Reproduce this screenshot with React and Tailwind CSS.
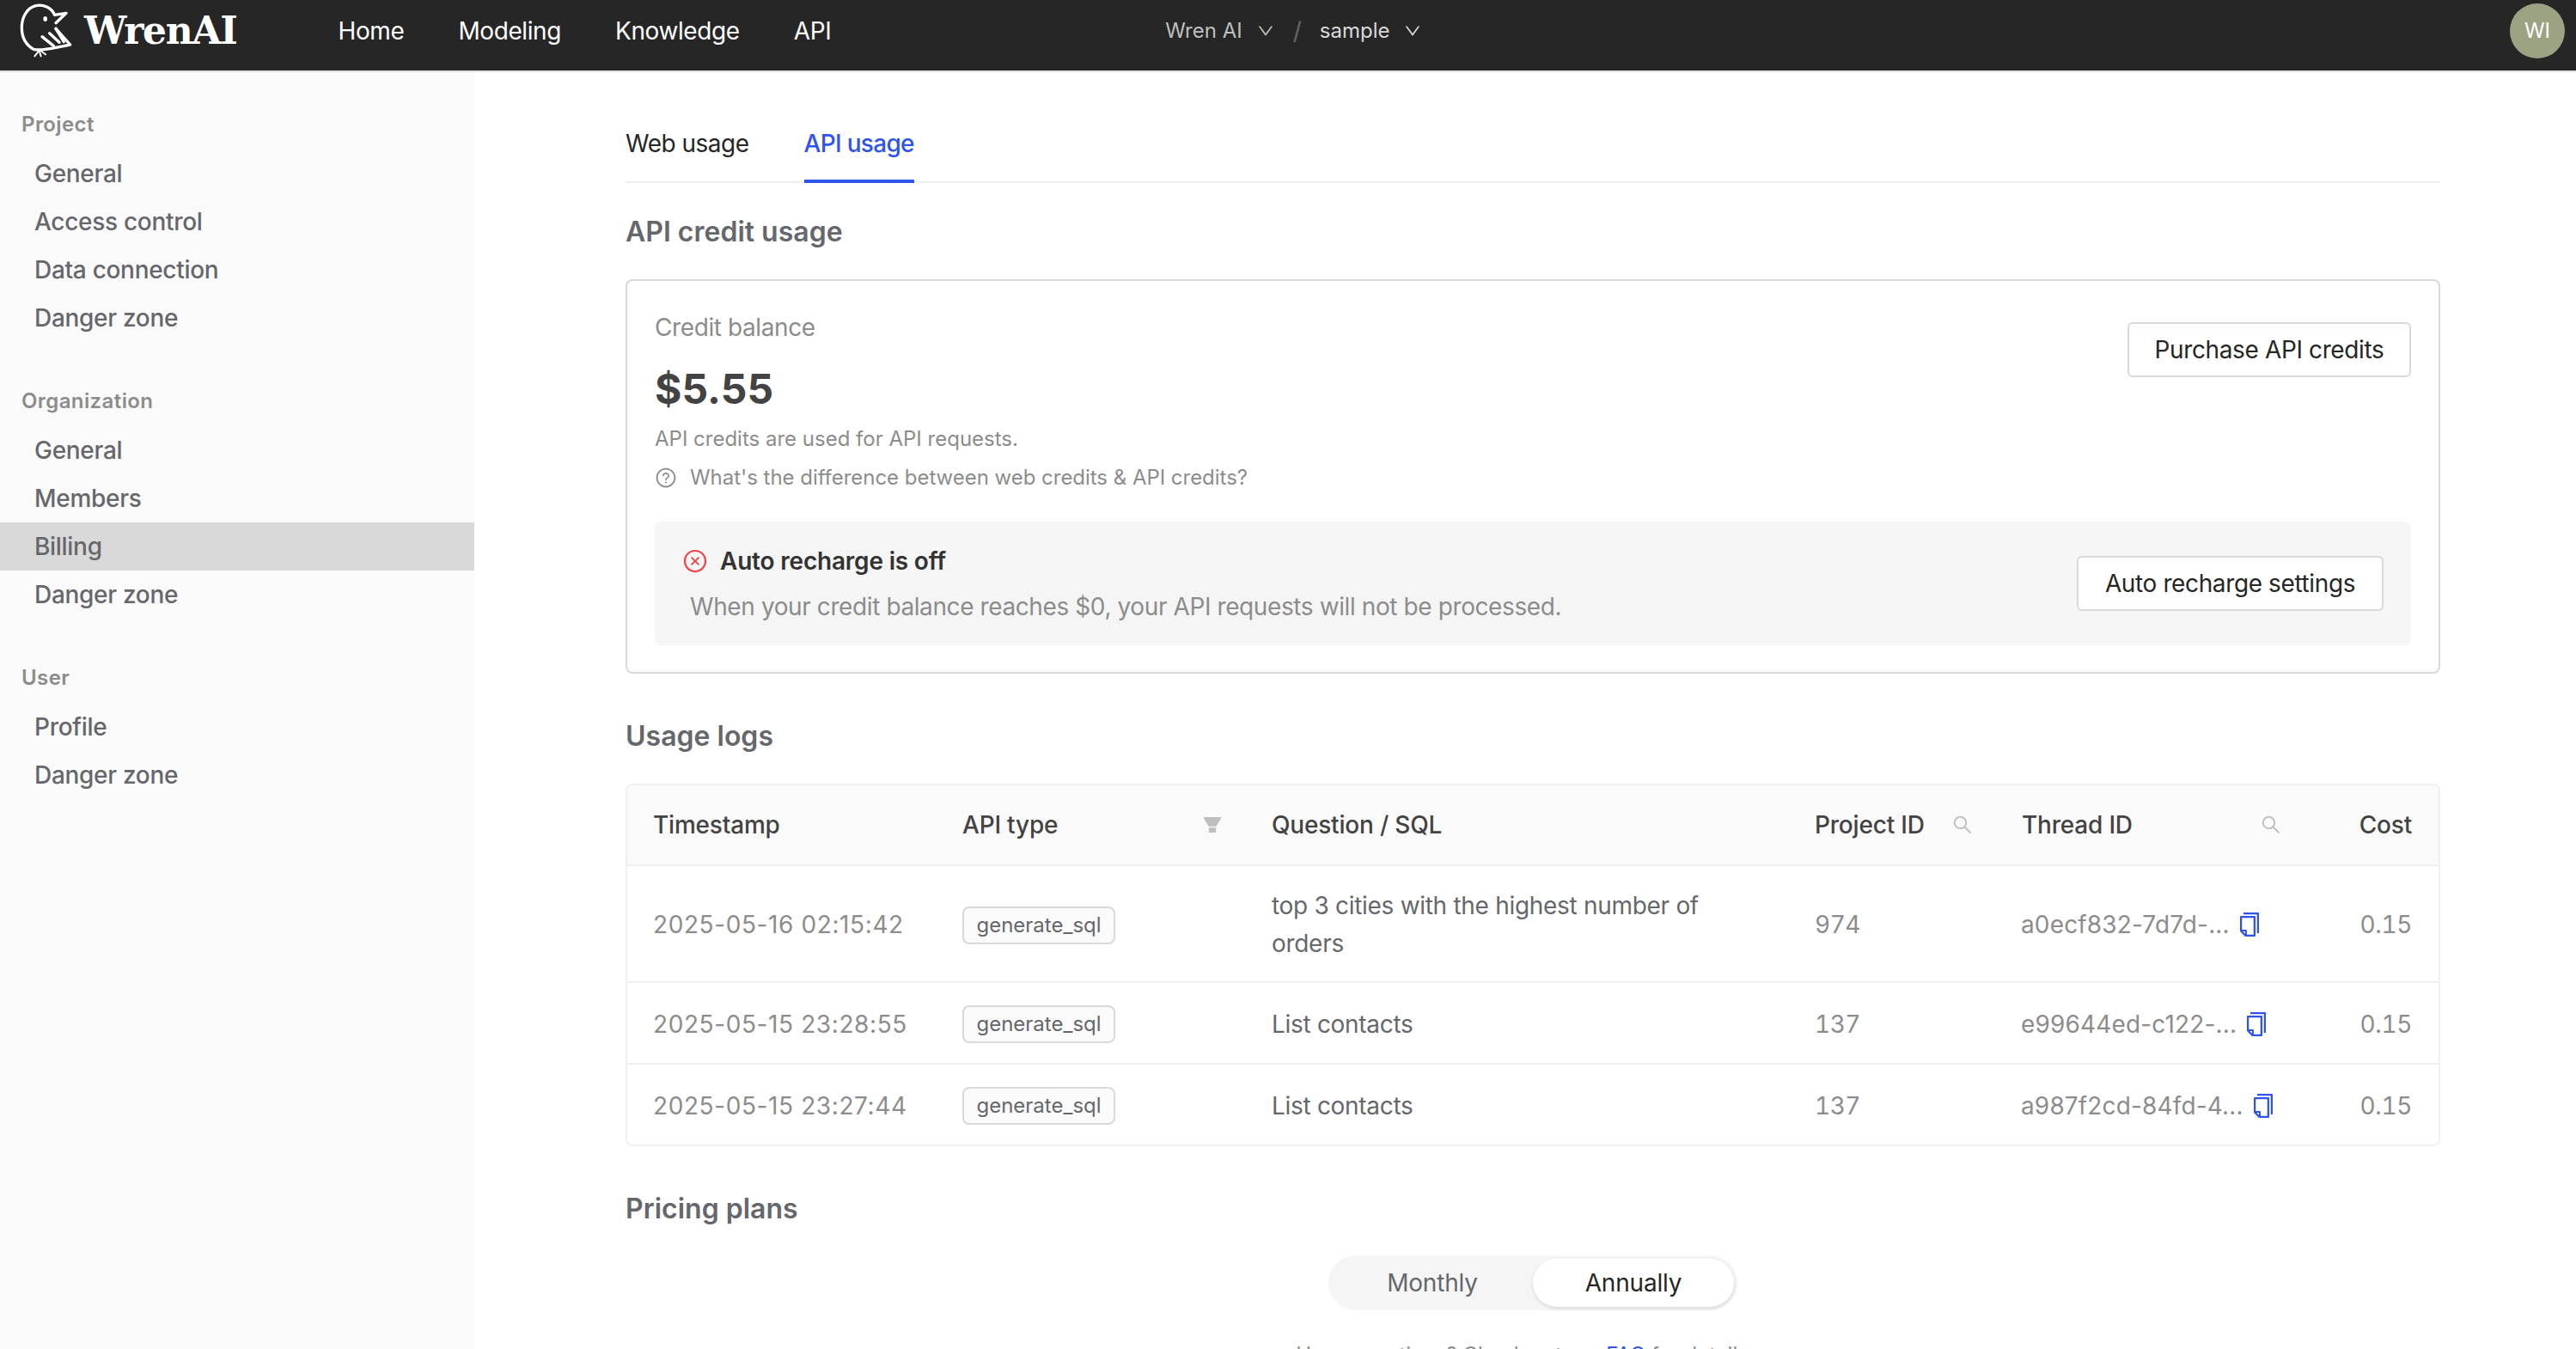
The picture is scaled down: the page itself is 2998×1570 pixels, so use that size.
import React from "react";
import {
  AiOutlineDown,
  AiOutlineCopy,
  AiOutlineSearch,
  AiFillFilter,
  AiOutlineCloseCircle,
  AiOutlineQuestionCircle,
} from "react-icons/ai";

function Logo() {
  return (
    <svg viewBox="0 0 225 216" className="h-[72px] w-[75px] shrink-0" fill="none" stroke="#fff" strokeWidth="10" strokeLinecap="round" strokeLinejoin="round">
      <path d="M146 52C134 26 106 14 80 20C48 28 30 62 31 100C32 132 48 158 72 172C96 178 130 170 200 156L150 100" />
      <path d="M146 52L186 46L150 80" />
      <path d="M102 128L142 160" />
      <path d="M128 116L162 148" />
      <path d="M150 100L178 146" />
      <path d="M92 176L76 196M92 178L98 196M96 176L114 190" strokeWidth="6" />
      <ellipse cx="113" cy="66" rx="7" ry="9" fill="#fff" stroke="none" />
    </svg>
  );
}

function SideGroup({ title, items, active, className }) {
  return (
    <div className={className}>
      <div className="mb-[10px] h-[38px] pl-[25px] text-[24px] font-semibold leading-[38px] tracking-[0.4px] text-[#8c8c8c]">{title}</div>
      {items.map((item) => (
        <div
          key={item}
          className={`h-[56px] pl-[40px] text-[28px] font-medium leading-[56px] tracking-[-0.3px] text-[#65676c] ${item === active ? "bg-[#d9d9d9]" : ""}`}
        >
          {item}
        </div>
      ))}
    </div>
  );
}

function Tag() {
  return (
    <span className="inline-block h-[44px] w-[178px] rounded-[8px] border-2 border-[#d9d9d9] bg-[#fafafa] text-center text-[24px] leading-[40px] text-[#65676c]">
      generate_sql
    </span>
  );
}

const rows = [
  { time: "2025-05-16 02:15:42", q: "top 3 cities with the highest number of orders", pid: "974", tid: "a0ecf832-7d7d-...", h: "h-[136px] border-b-2" },
  { time: "2025-05-15 23:28:55", q: "List contacts", pid: "137", tid: "e99644ed-c122-...", h: "h-[95px] border-b-2" },
  { time: "2025-05-15 23:27:44", q: "List contacts", pid: "137", tid: "a987f2cd-84fd-4...", h: "h-[93px]" },
];

function Th({ children, icon, className = "pl-[32px]" }) {
  return (
    <th className={`h-[94px] border-b-2 border-[#f0f0f0] text-left text-[28px] font-medium tracking-[-0.2px] text-[#434343] ${className}`}>
      <div className="flex items-center justify-between pr-[24px]">
        <span>{children}</span>
        {icon}
      </div>
    </th>
  );
}

export default function App() {
  return (
    <div className="flex h-screen flex-col overflow-hidden bg-white font-['Inter',sans-serif]">
      <header className="flex h-[84px] shrink-0 items-start border-b-2 border-[#e0e0e0] bg-[#262626]">
        <div className="flex h-[72px] w-full items-center">
          <div className="ml-[15px] flex items-center">
            <Logo />
            <span className="ml-[8px] font-['DejaVu_Serif',serif] text-[44px] font-bold leading-none tracking-[-1.3px] text-white">WrenAI</span>
          </div>
          <nav className="ml-[118px] flex gap-[63px] text-[28px] tracking-[-0.4px] text-white">
            <span>Home</span>
            <span>Modeling</span>
            <span>Knowledge</span>
            <span>API</span>
          </nav>
          <div className="ml-[389px] flex items-center text-[24px]">
            <span className="text-[#bfbfbf]">Wren AI</span>
            <AiOutlineDown className="ml-[16px] text-[22px] text-[#bfbfbf]" />
            <span className="mx-[21px] text-[28px] text-[#666666]">/</span>
            <span className="text-[#d9d9d9]">sample</span>
            <AiOutlineDown className="ml-[16px] text-[22px] text-[#d9d9d9]" />
          </div>
          <div className="ml-auto mr-[13px] flex h-[64px] w-[64px] items-center justify-center rounded-full bg-[#9ca383] text-[24px] text-white">WI</div>
        </div>
      </header>
      <div className="flex min-h-0 flex-1">
        <aside className="w-[552px] shrink-0 bg-[#fafafa] pt-[42px]">
          <SideGroup title="Project" items={["General", "Access control", "Data connection", "Danger zone"]} />
          <SideGroup className="mt-[50px]" title="Organization" items={["General", "Members", "Billing", "Danger zone"]} active="Billing" />
          <SideGroup className="mt-[50px]" title="User" items={["Profile", "Danger zone"]} />
        </aside>
        <main className="min-w-0 flex-1 overflow-hidden pl-[176px] pr-[158px] pt-[44px]">
          <div className="flex h-[85px] gap-[64px] border-b-2 border-[#f0f0f0] text-[28px] tracking-[-0.5px]">
            <div className="h-[85px] pt-[20px] leading-[38px] text-[#262626]">Web usage</div>
            <div className="h-[85px] border-b-4 border-[#2f54eb] pt-[20px] font-medium leading-[38px] tracking-[-0.7px] text-[#2f54eb]">API usage</div>
          </div>

          <h2 className="mt-[37px] text-[32px] font-semibold leading-[40px] text-[#65676c]">API credit usage</h2>

          <section className="mt-[35px] rounded-[8px] border-2 border-[#d9d9d9] px-[32px] pb-[31px] pt-[34px]">
            <div className="flex items-start justify-between">
              <div>
                <div className="text-[28px] leading-[40px] tracking-[-0.4px] text-[#8c8c8c]">Credit balance</div>
                <div className="mt-[22px] text-[48px] font-bold leading-[60px] text-[#434343]">$5.55</div>
                <div className="mt-[10px] text-[24px] leading-[36px] text-[#8c8c8c]">API credits are used for API requests.</div>
                <div className="mt-[9px] flex items-center gap-[15px] text-[24px] leading-[36px] tracking-[-0.03px] text-[#8c8c8c]">
                  <AiOutlineQuestionCircle className="text-[26px]" />
                  <span>What's the difference between web credits &amp; API credits?</span>
                </div>
              </div>
              <button className="mt-[14px] h-[64px] w-[330px] rounded-[6px] border-2 border-[#d9d9d9] bg-white text-[28px] tracking-[-0.38px] text-[#262626]">Purchase API credits</button>
            </div>
            <div className="mt-[33px] flex h-[144px] items-center justify-between rounded-[8px] bg-[#f5f5f5] pl-[32px] pr-[32px]">
              <div>
                <div className="flex items-center gap-[14px] text-[28px] font-semibold leading-[40px] tracking-[-0.2px] text-[#333333]">
                  <AiOutlineCloseCircle className="text-[30px] text-[#ef4444]" />
                  <span>Auto recharge is off</span>
                </div>
                <div className="ml-[9px] mt-[13px] text-[28px] leading-[40px] tracking-[-0.4px] text-[#8c8c8c]">When your credit balance reaches $0, your API requests will not be processed.</div>
              </div>
              <button className="h-[64px] w-[357px] rounded-[6px] border-2 border-[#d9d9d9] bg-white text-[28px] tracking-[-0.38px] text-[#262626]">Auto recharge settings</button>
            </div>
          </section>

          <h2 className="mt-[53px] text-[32px] font-semibold leading-[40px] text-[#65676c]">Usage logs</h2>

          <div className="mt-[35px] overflow-hidden rounded-[8px] border-2 border-[#f0f0f0]">
            <table className="w-full table-fixed border-separate border-spacing-0">
              <colgroup>
                <col className="w-[358px]" />
                <col className="w-[360px]" />
                <col className="w-[632px]" />
                <col className="w-[241px]" />
                <col className="w-[359px]" />
                <col className="w-[158px]" />
              </colgroup>
              <thead className="bg-[#fafafa]">
                <tr>
                  <Th className="pl-[30px]">Timestamp</Th>
                  <Th icon={<AiFillFilter className="text-[26px] text-[#bfbfbf]" />}>API type</Th>
                  <Th>Question / SQL</Th>
                  <Th icon={<AiOutlineSearch className="text-[26px] text-[#bfbfbf]" />}>Project ID</Th>
                  <Th icon={<AiOutlineSearch className="text-[26px] text-[#bfbfbf]" />}>Thread ID</Th>
                  <th className="h-[94px] border-b-2 border-[#f0f0f0] pr-[31px] text-right text-[28px] font-medium tracking-[-0.2px] text-[#434343]">Cost</th>
                </tr>
              </thead>
              <tbody className="text-[28px] text-[#8c8c8c]">
                {rows.map((r) => (
                  <tr key={r.time}>
                    <td className={`${r.h} border-[#f0f0f0] pl-[30px] pt-[2px] tracking-[0.6px]`}>{r.time}</td>
                    <td className={`${r.h} border-[#f0f0f0] pl-[32px] pt-[2px]`}><Tag /></td>
                    <td className={`${r.h} border-[#f0f0f0] pl-[32px] pr-[60px] pt-[2px] leading-[44px] tracking-[-0.3px] text-[#65676c]`}>{r.q}</td>
                    <td className={`${r.h} border-[#f0f0f0] pl-[32px] pt-[2px] tabular-nums tracking-[-0.5px]`}>{r.pid}</td>
                    <td className={`${r.h} border-[#f0f0f0] pl-[31px] pt-[2px] tracking-[0.15px]`}>
                      <div className="flex items-center gap-[7px]">
                        <span>{r.tid}</span>
                        <AiOutlineCopy className="text-[32px] text-[#2f54eb]" />
                      </div>
                    </td>
                    <td className={`${r.h} border-[#f0f0f0] pr-[31px] pt-[2px] text-right tabular-nums tracking-[-0.4px]`}>0.15</td>
                  </tr>
                ))}
              </tbody>
            </table>
          </div>

          <h2 className="mt-[53px] text-[32px] font-semibold leading-[40px] text-[#65676c]">Pricing plans</h2>

          <div className="mx-auto mt-[34px] flex h-[64px] w-[476px] items-center rounded-full bg-[#f5f5f5] p-[4px] text-[28px] tracking-[-0.2px]">
            <div className="w-[234px] text-center text-[#65676c]">Monthly</div>
            <div className="flex h-[56px] w-[234px] items-center justify-center rounded-full bg-white text-[#262626] shadow-[0_2px_4px_rgba(0,0,0,0.12)]">Annually</div>
          </div>

          <p className="mt-[34px] pr-[18px] text-center text-[24px] leading-[36px] text-[#8c8c8c]">
            Have questions? Check out our <span className="text-[#2f54eb]">FAQ</span> for details.
          </p>
        </main>
      </div>
    </div>
  );
}
